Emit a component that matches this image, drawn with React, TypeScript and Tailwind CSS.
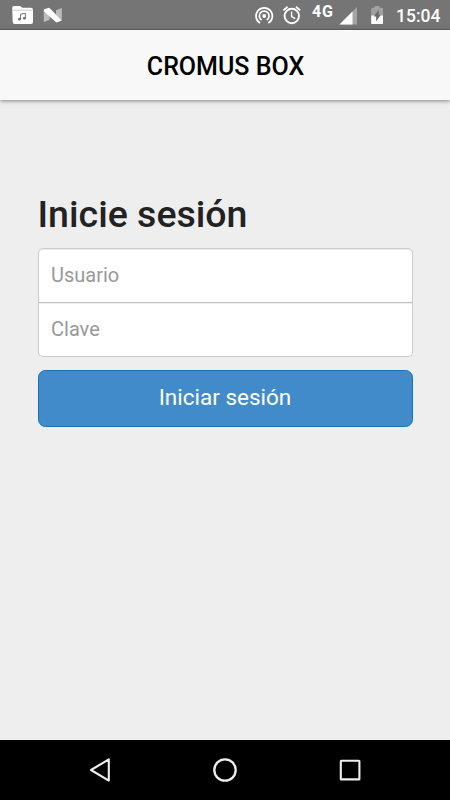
import { useState } from "react";

function FolderIcon() {
  return (
    <svg className="h-[30px] w-6" viewBox="10 0 24 30">
      <path
        d="M14 6h6.3l2 1.7H31q2 0 2 2V22q0 2-2 2H14.7q-2 0-2-2L12.2 8q0-2 1.8-2z"
        fill="#fff"
      />
      <path d="M12.2 10.2h20.4" stroke="#b5b5b5" strokeWidth="0.7" />
      <path
        d="M20.6 19v-4.9l4.8-.9v5"
        fill="none"
        stroke="#707070"
        strokeWidth="1"
      />
      <circle cx="19.5" cy="19.2" r="1.4" fill="#707070" />
      <circle cx="24.3" cy="18.3" r="1.4" fill="#707070" />
    </svg>
  );
}

function NougatIcon() {
  return (
    <svg className="h-[30px] w-5" viewBox="43 0 20 30">
      <path d="M43.8 9.5l5.9 5.5v4.8l-5.9 2.3z" fill="#bdbdbd" />
      <path d="M56 10.2l5.8-2.3v12.2l-5.8-5z" fill="#bdbdbd" />
      <path
        d="M44 9.2l4.3-1.3q1-.2 1.7.5l11.8 12.2-4.4 1.6q-1.1.3-1.9-.5L43.8 11.2z"
        fill="#fff"
      />
    </svg>
  );
}

function HotspotIcon() {
  return (
    <svg
      className="h-[30px] w-5"
      viewBox="254 0 20 30"
      fill="none"
      stroke="#fff"
      strokeWidth="1.7"
    >
      <path d="M260 23.1A8.2 8.2 0 1 1 268.4 23.1" />
      <path d="M261.6 20.1A4.9 4.9 0 1 1 266.8 20.1" />
      <circle cx="264.2" cy="16" r="1.9" fill="#fff" stroke="none" />
    </svg>
  );
}

function AlarmIcon() {
  return (
    <svg
      className="h-[30px] w-5"
      viewBox="282 0 20 30"
      fill="none"
      stroke="#fff"
      strokeWidth="1.9"
    >
      <circle cx="291.8" cy="16" r="7.2" />
      <path d="M283.4 10.4l4.2-3.6M296 6.8l4.2 3.6" />
      <path d="M291.6 11.5v5l3.6 2.2" strokeWidth="1.4" />
    </svg>
  );
}

function SignalIcon() {
  return (
    <svg className="h-[30px] w-[18px]" viewBox="339 0 18 30">
      <path d="M339.5 24.5L357 7v17.5z" fill="#a5a5a5" />
      <path d="M339.5 24.5L352.5 11.5v13z" fill="#fff" />
    </svg>
  );
}

function BatteryIcon() {
  return (
    <svg className="h-[30px] w-[14px]" viewBox="370 0 14 30">
      <path
        d="M371.2 9q0-1.2 1.2-1.2h2.2V6h5v1.8h2.2q1.2 0 1.2 1.2v7.5h-11.8z"
        fill="#a0a0a0"
      />
      <path d="M371.2 15.4H383v7.8q0 .9-.9.9h-10q-.9 0-.9-.9z" fill="#fff" />
      <path d="M378.7 9.8l-4.9 6.8h2.4v5l4.6-6.8h-2.1z" fill="#6a6a6a" />
    </svg>
  );
}

function StatusBar() {
  return (
    <div className="flex h-[30px] border-b border-[#686464] bg-[#757575] pl-[10px] text-white">
      <FolderIcon />
      <div className="ml-[9px]">
        <NougatIcon />
      </div>
      <div className="ml-[191px]">
        <HotspotIcon />
      </div>
      <div className="ml-2">
        <AlarmIcon />
      </div>
      <span className="ml-[10px] w-[27px] pt-[3px] text-[16px] leading-[17px] font-bold tracking-[0.7px]">
        4G
      </span>
      <SignalIcon />
      <div className="ml-[13px]">
        <BatteryIcon />
      </div>
      <span className="ml-3 pt-px text-[17.5px] leading-[30px] font-medium">
        15:04
      </span>
    </div>
  );
}

function NavigationBar() {
  return (
    <div className="flex h-[60px] items-center justify-between bg-black px-[85px]">
      <svg className="size-[30px]" viewBox="0 0 30 30" fill="none" stroke="#eee">
        <path
          d="M23.8 4.4v21.2L6 15z"
          strokeWidth="2.1"
          strokeLinejoin="round"
        />
      </svg>
      <svg className="size-[30px]" viewBox="0 0 30 30" fill="none" stroke="#eee">
        <circle cx="15" cy="15" r="10.7" strokeWidth="2.3" />
      </svg>
      <svg className="size-[30px]" viewBox="0 0 30 30" fill="none" stroke="#eee">
        <rect x="5.8" y="5.8" width="18.6" height="18.6" rx="0.5" strokeWidth="2.1" />
      </svg>
    </div>
  );
}

function LoginForm() {
  const [user, setUser] = useState("");
  const [password, setPassword] = useState("");

  return (
    <form
      className="flex flex-col px-[37.5px] pt-[93px]"
      onSubmit={(e) => e.preventDefault()}
    >
      <h2 className="text-[37.5px] leading-[42px] font-medium text-[#222]">
        Inicie sesión
      </h2>
      <input
        type="text"
        placeholder="Usuario"
        value={user}
        onChange={(e) => setUser(e.target.value)}
        className="mt-[13px] h-[55px] rounded-t-[5px] border border-[#ccc] bg-white px-[12.5px] pb-0.5 text-[20px] shadow-[inset_0_1px_1px_rgba(0,0,0,0.075)] outline-none placeholder:text-[#999]"
      />
      <input
        type="password"
        placeholder="Clave"
        value={password}
        onChange={(e) => setPassword(e.target.value)}
        className="-mt-px h-[55px] rounded-b-[5px] border border-[#ccc] border-t-[#c0c0c0] bg-white px-[12.5px] pb-0.5 text-[20px] shadow-[inset_0_1px_1px_rgba(0,0,0,0.075)] outline-none placeholder:text-[#999]"
      />
      <button
        type="submit"
        className="mt-[13px] h-[57px] rounded-[7.5px] border border-[#1572bb] bg-[#428bca] pb-px text-[22.5px] text-white"
      >
        Iniciar sesión
      </button>
    </form>
  );
}

export default function App() {
  return (
    <div className="flex h-[800px] w-[450px] flex-col overflow-hidden bg-[#eee] font-[Roboto,sans-serif]">
      <StatusBar />
      <header className="flex h-[70px] items-center justify-center bg-[#f8f8f8] pt-[3px] pl-px text-[25px] font-medium text-black shadow-[0_1px_4px_rgba(0,0,0,0.45)]">
        CROMUS BOX
      </header>
      <main className="flex-1">
        <LoginForm />
      </main>
      <NavigationBar />
    </div>
  );
}
